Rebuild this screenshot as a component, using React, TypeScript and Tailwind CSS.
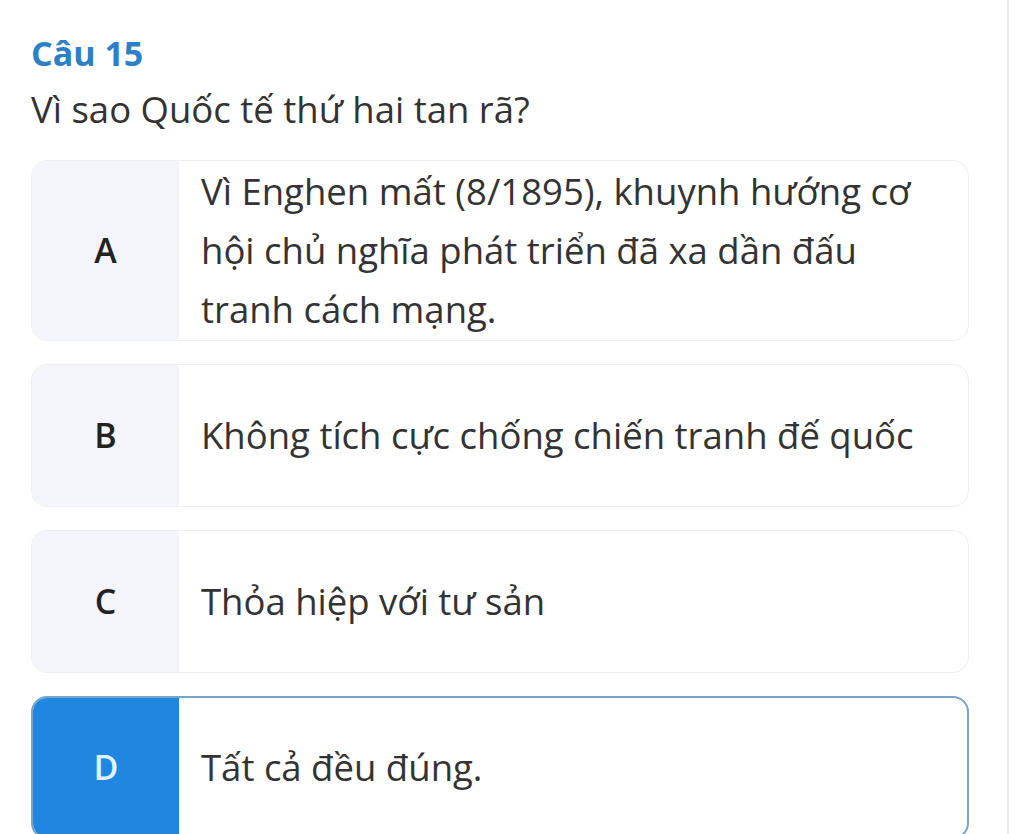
import React from "react";

const options = [
  { key: "A", text: "Vì Enghen mất (8/1895), khuynh hướng cơ hội chủ nghĩa phát triển đã xa dần đấu tranh cách mạng.", selected: false },
  { key: "B", text: "Không tích cực chống chiến tranh đế quốc", selected: false },
  { key: "C", text: "Thỏa hiệp với tư sản", selected: false },
  { key: "D", text: "Tất cả đều đúng.", selected: true },
];

export default function App() {
  return (
    <div
      className="w-[1024px] h-[834px] bg-white overflow-hidden flex"
      style={{ fontFamily: '"Open Sans", "Noto Sans", sans-serif' }}
    >
      <div className="w-[1007px] pl-[31px] pr-[38px] pt-[29px]">
        <div className="text-[34px] leading-[48px] font-bold text-[#2b80c6]">Câu 15</div>
        <div className="mt-[8px] text-[36.5px] leading-[48px] text-[#333]">Vì sao Quốc tế thứ hai tan rã?</div>
        <div className="mt-[27px] flex flex-col gap-[23px]">
          {options.map((o) => (
            <div
              key={o.key}
              className={
                o.selected
                  ? "flex min-h-[143px] rounded-[16px] border-2 border-[#79a3c8] overflow-hidden bg-white"
                  : "flex min-h-[143px] rounded-[16px] border border-[#eeeff2] overflow-hidden bg-white"
              }
            >
              <div
                className={
                  o.selected
                    ? "w-[146px] shrink-0 flex items-center justify-center bg-[#1f87e0] text-[#dff3ff] text-[34px] font-semibold"
                    : "w-[147px] shrink-0 flex items-center justify-center bg-[#f3f5fa] text-[#222] text-[34px] font-semibold"
                }
              >
                {o.key}
              </div>
              <div className="flex-1 flex items-center pl-[22px] pr-[20px] py-[1px] text-[36.5px] leading-[59px] text-[#333]">
                {o.text}
              </div>
            </div>
          ))}
        </div>
      </div>
      <div className="w-[2px] h-full bg-[#e9e9e9]" />
    </div>
  );
}
